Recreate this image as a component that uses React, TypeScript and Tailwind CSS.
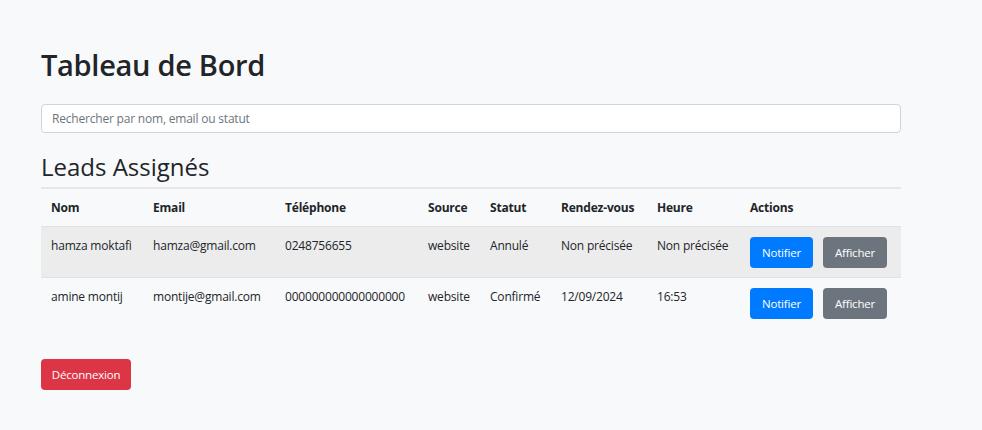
import React from "react";

interface Lead {
  nom: string;
  email: string;
  telephone: string;
  source: string;
  statut: string;
  rdv: string;
  heure: string;
}

const leads: Lead[] = [
  {
    nom: "hamza moktafi",
    email: "hamza@gmail.com",
    telephone: "0248756655",
    source: "website",
    statut: "Annulé",
    rdv: "Non précisée",
    heure: "Non précisée",
  },
  {
    nom: "amine montij",
    email: "montije@gmail.com",
    telephone: "000000000000000000",
    source: "website",
    statut: "Confirmé",
    rdv: "12/09/2024",
    heure: "16:53",
  },
];

const columns = [
  { label: "Nom", w: "w-[102px]" },
  { label: "Email", w: "w-[132px]" },
  { label: "Téléphone", w: "w-[143px]" },
  { label: "Source", w: "w-[62px]" },
  { label: "Statut", w: "w-[71px]" },
  { label: "Rendez-vous", w: "w-[96px]" },
  { label: "Heure", w: "w-[93px]" },
  { label: "Actions", w: "" },
];

const cell = "px-[10px] pt-[10px] pb-[9px] align-top text-left whitespace-nowrap tracking-[-0.2px]";

export default function App() {
  return (
    <div className="min-h-screen bg-[#f8f9fa] text-[#212529] font-['Open_Sans','Noto_Sans',sans-serif]">
      <div className="w-[860px] ml-[41px] pt-[46px] pb-10">
        <h1 className="text-[29px] leading-[38px] font-semibold tracking-[-0.3px]">Tableau de Bord</h1>

        <input
          type="text"
          placeholder="Rechercher par nom, email ou statut"
          className="mt-[20px] block w-full h-[29px] px-[10px] text-[12px] tracking-[-0.2px] bg-white border border-[#ced4da] rounded-[4px] placeholder:text-[#6c757d] outline-none"
        />

        <h2 className="mt-[19px] text-[24px] leading-[29px] font-medium">Leads Assignés</h2>

        <table className="mt-[6px] w-full table-fixed border-collapse text-[12px] leading-[18px]">
          <thead>
            <tr className="border-t-2 border-[#e5e7ea] border-b border-b-[#dee2e6]">
              {columns.map((c) => (
                <th key={c.label} className={`${cell} ${c.w} font-bold`}>
                  {c.label}
                </th>
              ))}
            </tr>
          </thead>
          <tbody>
            {leads.map((lead, i) => (
              <tr
                key={lead.email}
                className={i % 2 === 0 ? "bg-[#ececed] border-b border-[#dee2e6]" : ""}
              >
                <td className={cell}>{lead.nom}</td>
                <td className={cell}>{lead.email}</td>
                <td className={cell}>{lead.telephone}</td>
                <td className={cell}>{lead.source}</td>
                <td className={cell}>{lead.statut}</td>
                <td className={cell}>{lead.rdv}</td>
                <td className={cell}>{lead.heure}</td>
                <td className={cell}>
                  <div className="flex gap-[10px]">
                    <button className="h-[31px] w-[63px] rounded-[4px] bg-[#007bff] text-white text-[11.5px]">
                      Notifier
                    </button>
                    <button className="h-[31px] w-[64px] rounded-[4px] bg-[#6c757d] text-white text-[11.5px]">
                      Afficher
                    </button>
                  </div>
                </td>
              </tr>
            ))}
          </tbody>
        </table>

        <button className="mt-[31px] h-[31px] w-[90px] rounded-[4px] bg-[#dc3545] text-white text-[11.5px] tracking-[-0.2px]">
          Déconnexion
        </button>
      </div>
    </div>
  );
}
